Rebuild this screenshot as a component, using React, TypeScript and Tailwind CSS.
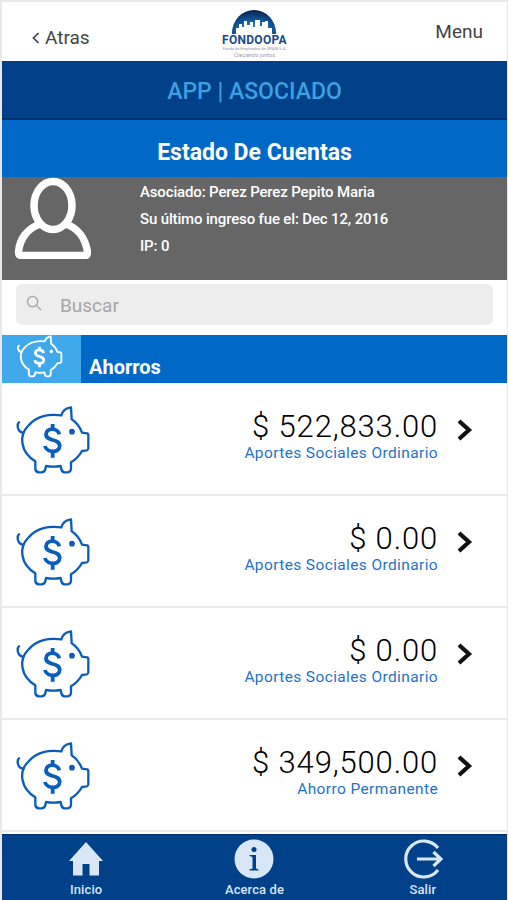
const accounts = [
  { amount: "$ 522,833.00", label: "Aportes Sociales Ordinario" },
  { amount: "$ 0.00", label: "Aportes Sociales Ordinario" },
  { amount: "$ 0.00", label: "Aportes Sociales Ordinario" },
  { amount: "$ 349,500.00", label: "Ahorro Permanente" },
];

const PiggyIcon = ({
  className,
  stroke = 7,
}: {
  className?: string;
  stroke?: number;
}) => (
  <svg
    viewBox="48 45 225 210"
    fill="none"
    stroke="currentColor"
    strokeWidth={stroke}
    strokeLinejoin="round"
    strokeLinecap="round"
    className={className}
  >
    <path d="M57 97C50 105 52 127 71 128" />
    <path d="M184 76C188 61 199 54 213 52L215 88C229 97 239 110 246 128L262 130Q265 131 265 136V175Q265 180 260 181L246 183C237 199 226 209 213 217V236Q212 247 201 247H194Q185 246 184 237L182 228Q160 232 138 228L136 238Q134 247 124 247H117Q107 246 106 237V214C62 188 55 137 84 108C112 76 146 72 184 76Z" />
    <path
      strokeWidth={stroke + 4.5}
      strokeLinecap="butt"
      d="M178 133C174 113 138 112 138 133C138 156 179 144 179 168C179 190 139 189 135 168M158 102V120M158 184V203"
    />
    <circle cx="216" cy="125" r="8.5" fill="currentColor" stroke="none" />
  </svg>
);

const Logo = () => (
  <div className="flex w-[70px] flex-col items-center">
    <svg viewBox="0 0 52 27" className="-mb-px h-[27px] w-[52px]">
      <defs>
        <radialGradient id="dome" cx="50%" cy="85%" r="85%">
          <stop offset="0" stopColor="#3b9ade" />
          <stop offset="0.5" stopColor="#125a9c" />
          <stop offset="1" stopColor="#071f4e" />
        </radialGradient>
      </defs>
      <path d="M4 25A22 23 0 0 1 48 25V26H4Z" fill="url(#dome)" />
      <path
        d="M8 27V20H11V16H14V19H16V13H19V17H22V14H25V19H27V12H32V18H34V14H37V13H40V20H44V27Z"
        fill="#fff"
      />
    </svg>
    <p className="text-[12px] leading-[12px] font-bold tracking-[0.3px] text-[#164b86]">
      FONDOOPA
    </p>
    <p className="text-[4px] leading-[6px] whitespace-nowrap text-[#8e969f]">
      Fondo de Empleados de OPAIN S.A.
    </p>
    <p className="text-[5.5px] leading-[6px] whitespace-nowrap text-[#9aa0a6]">
      Creciendo juntos
    </p>
  </div>
);

export default function App() {
  return (
    <div className="flex h-[900px] w-[508px] flex-col overflow-hidden border-t-2 border-r border-l-2 border-[#e9e9e9] bg-white font-['Roboto','Liberation_Sans',sans-serif]">
      <header className="grid h-[59px] shrink-0 grid-cols-3 text-[19px] text-[#444]">
        <div className="flex items-center gap-[5px] pt-[13px] pl-[30px]">
          <svg
            viewBox="0 0 8 12"
            fill="none"
            stroke="currentColor"
            strokeWidth="1.7"
            className="h-3 w-2"
          >
            <path d="M6.5 1L1.5 6L6.5 11" />
          </svg>
          <span>Atras</span>
        </div>
        <div className="flex justify-center pt-[6px]">
          <Logo />
        </div>
        <div className="flex items-center justify-end pt-[2px] pr-6">Menu</div>
      </header>

      <div className="flex h-[59px] shrink-0 items-center justify-center border-b-2 border-[#00306f] bg-[#004189] pt-[5px] text-[23px] font-medium text-[#3f9fe4]">
        APP | ASOCIADO
      </div>
      <h1 className="flex h-[57px] shrink-0 items-center justify-center bg-[#0069c7] pt-[9px] text-[23px] font-bold text-white">
        Estado De Cuentas
      </h1>

      <section className="flex h-[103px] shrink-0 bg-[#666]">
        <svg
          viewBox="0 0 76 82"
          fill="none"
          stroke="#fff"
          strokeWidth="7.5"
          strokeLinejoin="round"
          className="ml-3 h-[82px] w-[77px]"
        >
          <ellipse cx="38.5" cy="28.5" rx="19" ry="24" />
          <path d="M26 47C13 51 5 62 4 75Q4 78.500 7 78.500H70Q73 78.500 73 75C71 62 64 51 51 47" />
        </svg>
        <div className="ml-[49px] pt-[2px] text-[15px] leading-[27px] font-medium tracking-[-0.15px] text-white">
          <p>Asociado: Perez Perez Pepito Maria</p>
          <p>Su último ingreso fue el: Dec 12, 2016</p>
          <p>IP: 0</p>
        </div>
      </section>

      <div className="h-[55px] shrink-0 pt-1 pr-[14px] pl-[14px]">
        <div className="flex h-[41px] items-center rounded-md bg-[#ededed] pl-[10px] text-[19px] text-[#a6a6a6]">
          <svg
            viewBox="0 0 17 17"
            fill="none"
            stroke="currentColor"
            strokeWidth="1.4"
            className="mb-[3px] h-4 w-4"
          >
            <circle cx="7" cy="7" r="5.500" />
            <path d="M11 11L16 16" />
          </svg>
          <span className="mt-[3px] ml-[18px]">Buscar</span>
        </div>
      </div>

      <div className="flex h-12 shrink-0 bg-[#0069c7] text-white">
        <div className="w-[79px] bg-[#40a9ec] pl-[15px]">
          <PiggyIcon className="h-[43px] w-[46px]" stroke={9} />
        </div>
        <h2 className="pt-[17px] pl-2 text-[20px] leading-[30px] font-bold">
          Ahorros
        </h2>
      </div>

      <ul className="shrink-0 pt-px">
        {accounts.map((account, idx) => (
          <li
            key={idx}
            className="flex h-28 border-b-2 border-[#ebebeb] pt-[21px] pl-[14px]"
          >
            <PiggyIcon className="h-[70px] w-[75px] text-[#0a5ebb]" />
            <div className="ml-auto text-right">
              <p className="-mr-px pt-1 text-[31px] leading-9 font-light tracking-[0.85px] text-black">
                {account.amount}
              </p>
              <p className="-mr-px text-[15.5px] leading-[17px] tracking-[0.38px] text-[#1f72c4]">
                {account.label}
              </p>
            </div>
            <svg
              viewBox="0 0 16 22"
              fill="none"
              stroke="#111"
              strokeWidth="4.2"
              className="mt-[14px] mr-[34px] ml-5 h-[22px] w-4"
            >
              <path d="M2 2L12 11L2 20" />
            </svg>
          </li>
        ))}
      </ul>

      <nav className="mt-auto grid h-[66px] shrink-0 grid-cols-3 border-t border-[#00306f] bg-[#004189] text-center text-[13px] leading-[15px] font-medium tracking-[0.1px] text-[#d9e6f5]">
        <a className="flex flex-col items-center">
          <svg
            viewBox="0 0 34 34"
            fill="currentColor"
            className="mt-[7px] h-[34px] w-[34px]"
          >
            <path d="M17 0L34 19H30V33.500H20.500V22H13.500V33.500H4V19H0Z" />
          </svg>
          <span className="mt-[6px]">Inicio</span>
        </a>
        <a className="flex flex-col items-center">
          <svg viewBox="0 0 40 40" className="mt-1 h-10 w-10">
            <circle cx="20" cy="20" r="19.500" fill="#d9e6f5" />
            <circle cx="20" cy="10.500" r="2.500" fill="#004189" />
            <path
              d="M15.500 16H22V29.500L24.500 30.500V31.500H15.500V30.500L18.500 29.500V18L15.500 17Z"
              fill="#004189"
            />
          </svg>
          <span className="mt-[3px]">Acerca de</span>
        </a>
        <a className="flex flex-col items-center">
          <svg
            viewBox="0 0 40 40"
            fill="none"
            stroke="currentColor"
            strokeWidth="3.200"
            className="mt-1 h-10 w-10"
          >
            <path d="M35 9A18 18 0 1 0 35 31M14 20H37M30.500 13L38 20L30.500 27" />
          </svg>
          <span className="mt-[3px]">Salir</span>
        </a>
      </nav>
    </div>
  );
}
